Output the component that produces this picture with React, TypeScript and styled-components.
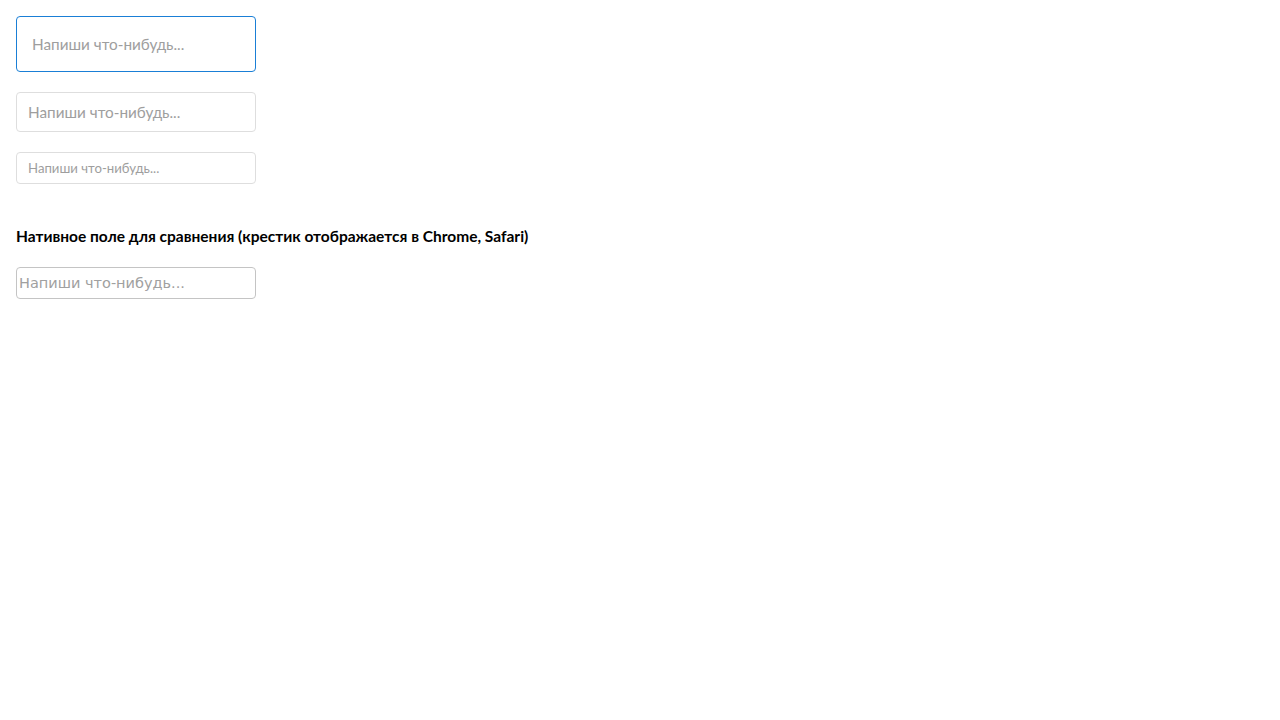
import styled, { createGlobalStyle } from "styled-components";

const GlobalStyle = createGlobalStyle`
  body {
    margin: 0;
    background: #fff;
    font-family: Lato, "Noto Sans", sans-serif;
  }
`;

const Page = styled.div`
  display: flex;
  flex-direction: column;
  align-items: flex-start;
  padding: 16px;
`;

type Size = "l" | "m" | "s";

const sizes = {
  l: { height: 56, padding: 15, font: 15.3 },
  m: { height: 40, padding: 11, font: 15.3 },
  s: { height: 32, padding: 11, font: 13.2 },
};

const Field = styled.input<{ $size: Size; $focused?: boolean }>`
  box-sizing: border-box;
  width: 240px;
  height: ${(p) => sizes[p.$size].height}px;
  margin-bottom: 20px;
  padding: 0 ${(p) => sizes[p.$size].padding}px;
  border: 1px solid ${(p) => (p.$focused ? "#1a7fd6" : "#dedede")};
  border-radius: 4px;
  font-family: Lato, "Noto Sans", sans-serif;
  font-size: ${(p) => sizes[p.$size].font}px;
  color: #333;
  outline: none;

  &::placeholder {
    color: #9e9e9e;
  }
`;

const Title = styled.h3`
  margin: 20px 0 19px;
  font-size: 15.5px;
  line-height: 24px;
  font-weight: 700;
  color: #000;
`;

const Native = styled.input`
  box-sizing: border-box;
  width: 240px;
  height: 32px;
  padding: 1px 2px;
  border: 1px solid #c4c4c4;
  border-radius: 4px;
  font-family: "DejaVu Sans", sans-serif;
  font-size: 14.5px;

  &::placeholder {
    color: #a0a0a0;
  }
`;

export default function App() {
  return (
    <Page>
      <GlobalStyle />
      <Field $size="l" $focused placeholder="Напиши что-нибудь..." />
      <Field $size="m" placeholder="Напиши что-нибудь..." />
      <Field $size="s" placeholder="Напиши что-нибудь..." />
      <Title>Нативное поле для сравнения (крестик отображается в Chrome, Safari)</Title>
      <Native type="search" placeholder="Напиши что-нибудь..." />
    </Page>
  );
}
